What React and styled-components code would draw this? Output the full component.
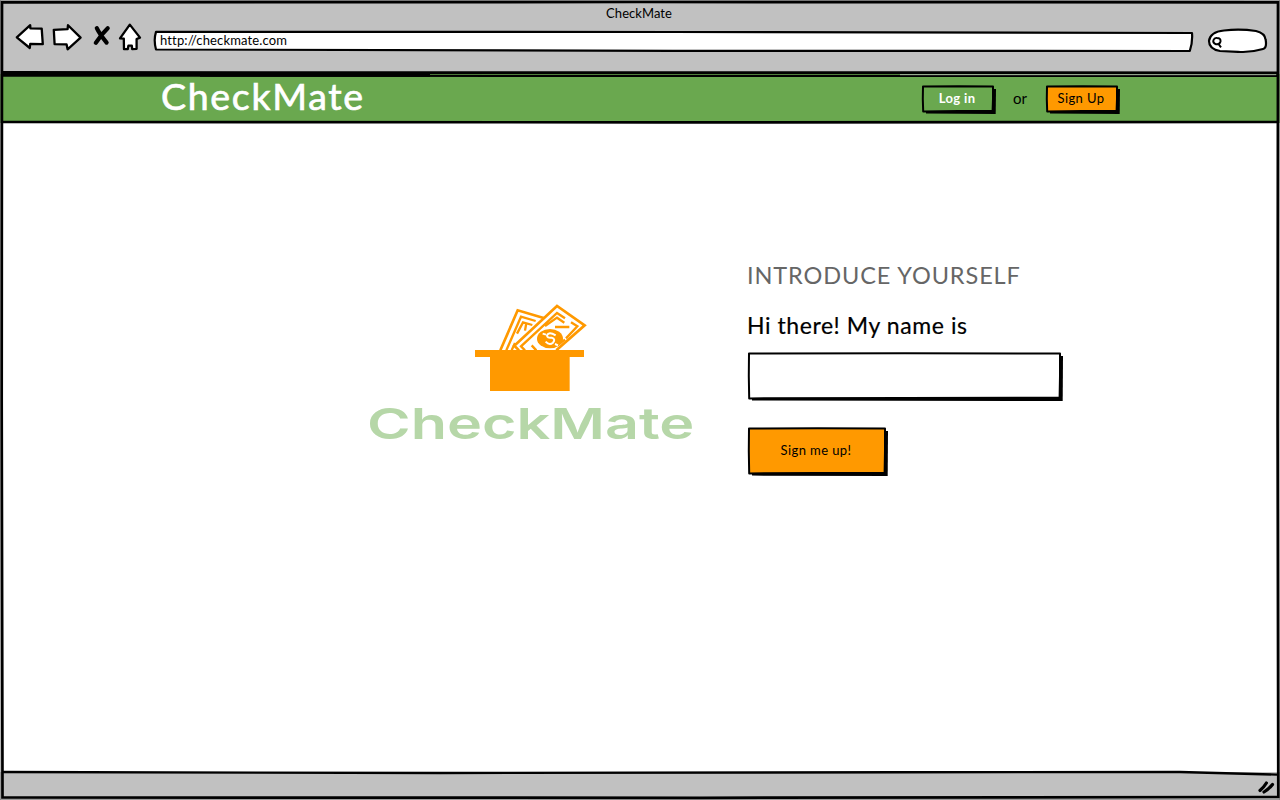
import React from "react";
import styled, { createGlobalStyle } from "styled-components";

const GlobalStyle = createGlobalStyle`
  *, *::before, *::after { box-sizing: border-box; }
  body { margin: 0; background: #fff; }
`;

const Window = styled.div`
  position: relative;
  display: flex;
  flex-direction: column;
  width: 1280px;
  height: 800px;
  overflow: hidden;
  background: #fff;
  color: #000;
  font-family: Lato, "Liberation Sans", sans-serif;
`;

const Overlay = styled.svg`
  position: absolute;
  inset: 0;
  width: 100%;
  height: 100%;
  overflow: visible;
  pointer-events: none;
`;

const Chrome = styled.header`
  height: 74px;
  flex: none;
  display: flex;
  flex-direction: column;
  background: #c1c1c1;
`;

const TitleBar = styled.div`
  height: 22px;
  padding: 5px 2px 0 0;
  display: flex;
  justify-content: center;
`;

const Label = styled.span`
  display: block;
  white-space: nowrap;
  font-size: ${(p) => p.$size}px;
  line-height: ${(p) => p.$line || p.$size}px;
  letter-spacing: ${(p) => p.$track || 0}px;
  font-weight: ${(p) => p.$weight || 400};
  color: ${(p) => p.$color || "#000"};
  -webkit-text-stroke: ${(p) => p.$ink || 0}px currentColor;
`;

const Toolbar = styled.div`
  display: flex;
  align-items: flex-start;
  padding-left: 14px;
`;

const NavIcons = styled.svg`
  width: 132px;
  height: 32px;
  flex: none;
`;

const AddressBar = styled.div`
  position: relative;
  width: 1040px;
  height: 22px;
  margin: 8px 0 0 7px;
  padding: 3px 0 0 7px;
`;

const BarText = styled.div`
  position: relative;
`;

const SearchPill = styled.svg`
  width: 62px;
  height: 26px;
  margin: 6px 0 0 13px;
`;

const Banner = styled.nav`
  height: 49px;
  flex: none;
  display: flex;
  align-items: flex-start;
  justify-content: space-between;
  padding: 3px 160px 0 161px;
  background: #6aa84f;
`;

const Account = styled.div`
  display: flex;
  align-items: flex-start;
  padding-top: 7px;
`;

const Or = styled.div`
  padding: 5px 18px 0 17px;
`;

const SketchButton = styled.button`
  position: relative;
  display: flex;
  align-items: center;
  justify-content: center;
  width: ${(p) => p.$w}px;
  height: ${(p) => p.$h}px;
  padding: 0 3px 2px 0;
  border: 0;
  background: none;
  font: inherit;
`;

const ButtonText = styled.span`
  position: relative;
`;

const Page = styled.main`
  flex: 1;
  display: flex;
  padding-left: 367px;
`;

const Brand = styled.section`
  width: 380px;
  padding-top: 172px;
`;

const Hat = styled.svg`
  display: block;
  width: 130px;
  height: 105px;
  margin-left: 98px;
`;

const Wordmark = styled.div`
  width: max-content;
  margin-top: 1px;
  font-family: Inter, sans-serif;
  font-size: 43px;
  line-height: 44px;
  font-weight: 600;
  color: #b6d7a8;
  transform: scaleX(1.378);
  transform-origin: 0 0;
`;

const Form = styled.form`
  padding-top: 138px;
`;

const Question = styled.div`
  margin-top: 22px;
`;

const Field = styled.div`
  position: relative;
  width: 316px;
  height: 50px;
  margin: 12px 0 25px;
`;

const StatusBar = styled.footer`
  height: 28px;
  flex: none;
  background: #c1c1c1;
`;

/* Box with slightly uneven edges and a solid drop shadow. */
function SketchBox({ w, h, fill }) {
  return (
    <Overlay viewBox={`0 0 ${w} ${h}`} aria-hidden="true">
      <path d={`M5 5 L${w} 5 L${w - 0.3} ${h} L5 ${h - 0.4} Z`} fill="#000" />
      <path
        d={`M2 2.6 L${w / 2} 2.2 L${w - 3} 2.6 L${w - 3} ${h / 2} L${w - 3.4} ${h - 3.2} L${w / 2} ${h - 3} L2.2 ${h - 2.6} L1.8 ${h / 2} Z`}
        fill={fill}
        stroke="#000"
        strokeWidth="2"
        strokeLinejoin="round"
      />
    </Overlay>
  );
}

function Navigation() {
  return (
    <NavIcons viewBox="14 22 132 32" stroke="#000" strokeWidth="2.3" strokeLinejoin="round" strokeLinecap="round" fill="#fff">
      <path d="M16.8 37.3 L30.2 25.2 L30.4 28.4 L41.7 28.6 L42.8 44.2 L30.2 44 L29.8 48 Z" />
      <path d="M53.8 29.8 L67.6 29.2 L68 25.2 L80.6 37.6 L67.6 49.3 L66.6 44.4 L54.6 44.2 Z" />
      <path d="M96.8 28.2 Q99.5 34 106.6 42.6 M107.7 28.2 Q101.6 34 95.8 42.8" fill="none" strokeWidth="4.2" />
      <path d="M129.8 24.6 L140 37.6 L136.6 39 L136.6 48.8 L132.2 49.2 L131.8 45.6 L128.4 45.6 L127.8 49 L124 49.2 L123.8 38.6 L120 38.4 Z" />
    </NavIcons>
  );
}

function Frame() {
  return (
    <Overlay viewBox="0 0 1280 800" fill="none" stroke="#000" strokeWidth="2.7" aria-hidden="true">
      <path d="M0 0 H1280 V800 H0 Z" stroke="#777" strokeWidth="1" />
      <path d="M2 2.3 L640 2 L1278 2.3 L1277.6 420 L1278.3 797 L700 797.8 L2.5 797.5 L1.7 400 Z" />
      <path d="M2 72.6 L500 72.8 L1278 72.9" strokeWidth="3" />
      <path d="M2 75.2 L430 75.2" strokeWidth="3" />
      <path d="M200 75.8 L1277 76.1" strokeWidth="2" />
      <path d="M900 74.7 H1276" stroke="#d0d0d0" strokeWidth=".7" />
      <path d="M2 122 L660 122.4 L1278 122" strokeWidth="2.6" />
      <path d="M2 772 L440 773 L900 772.2 L1180 772 L1277 774.6" strokeWidth="2.4" />
      <path d="M1260 790.5 Q1264 787 1266.4 783 M1264 792 Q1269 789 1272.5 784.5" strokeWidth="3.2" strokeLinecap="round" />
    </Overlay>
  );
}

function MoneyHat() {
  return (
    <Hat viewBox="0 0 390 315" fill="none" stroke="#ff9900" strokeWidth="8">
      <path d="M106 166 L158 46 L236 69" />
      <path d="M124 166 L168 65 L212 78" strokeWidth="7" />
      <path d="M140 166 L150 144 M156 116 L174 82 L202 90 M184 84 L180 107" strokeWidth="7" />
      <path d="M148 152 L276 33 L359 91 L272 166 H160 Z" fill="#fff" stroke="none" />
      <path d="M162 166 L148 152 L276 33 L359 91 L274 166" />
      <path d="M180 166 L168 154 L276 54 L300 70 M318 82 L337 94 L303 130" strokeWidth="7" />
      <path d="M240 93 L276 68 L298 83 M270 96 H313 M200 151 L214 166 M300 134 L276 152" strokeWidth="7" />
      <ellipse cx="255" cy="131" rx="39" ry="29" fill="#ff9900" stroke="none" />
      <path d="M233 116 L243 119 M272 121 Q251 108 246 121 Q246 130 260 128 Q273 131 264 143 Q253 152 242 140 M270 147 L279 151" stroke="#fff" strokeWidth="6" />
      <path d="M30 165 H357 V186 H314 V288 H75 V186 H30 Z" fill="#ff9900" stroke="none" />
    </Hat>
  );
}

export default function App() {
  return (
    <Window>
      <GlobalStyle />
      <Chrome>
        <TitleBar>
          <Label $size={13} $line={16} $track={0.05}>CheckMate</Label>
        </TitleBar>
        <Toolbar>
          <Navigation />
          <AddressBar>
            <Overlay viewBox="0 0 1040 22" aria-hidden="true">
              <path d="M3 1.8 L520 2 L1039 3 Q1039.8 12 1036.8 21 L520 20.8 L3 19.5 Q.4 10 3 1.8 Z" fill="#fff" stroke="#000" strokeWidth="2.2" strokeLinejoin="round" />
            </Overlay>
            <BarText>
              <Label $size={13} $line={14} $track={0.15}>http://checkmate.com</Label>
            </BarText>
          </AddressBar>
          <SearchPill viewBox="1206 28 62 26" fill="#fff" stroke="#000" strokeWidth="2.2">
            <path d="M1209 41 Q1210 32 1224 30.5 Q1240 28.7 1256 31 Q1265 33 1265.7 40 Q1267 48 1263 49 Q1250 52.8 1238 51.8 L1220 51 Q1209 49 1209 41 Z" />
            <path d="M1217 38 Q1221 38 1220.5 41.5 Q1219.5 45 1216 44.2 Q1212.5 43 1213.5 40 Q1214.5 37.5 1217 38 M1218.5 44 L1221 47.3" strokeWidth="2" />
          </SearchPill>
        </Toolbar>
      </Chrome>
      <Banner>
        <Label $size={37.5} $line={38} $track={1.7} $color="#fff" $ink={0.7}>CheckMate</Label>
        <Account>
          <SketchButton type="button" $w={75} $h={30}>
            <SketchBox w={75} h={30} fill="#6aa84f" />
            <ButtonText><Label $size={13} $line={16} $track={0.35} $weight={700} $color="#fff">Log in</Label></ButtonText>
          </SketchButton>
          <Or><Label $size={15} $line={18}>or</Label></Or>
          <SketchButton type="button" $w={75} $h={30}>
            <SketchBox w={75} h={30} fill="#ff9900" />
            <ButtonText><Label $size={13} $line={16} $track={0.4}>Sign Up</Label></ButtonText>
          </SketchButton>
        </Account>
      </Banner>
      <Page>
        <Brand>
          <MoneyHat />
          <Wordmark>CheckMate</Wordmark>
        </Brand>
        <Form>
          <Label $size={23.5} $line={28} $track={0.9} $color="#666">INTRODUCE YOURSELF</Label>
          <Question><Label $size={23} $line={28} $track={0.57} $ink={0.2}>Hi there! My name is</Label></Question>
          <Field><SketchBox w={316} h={50} fill="#fff" /></Field>
          <SketchButton type="button" $w={141} $h={50}>
            <SketchBox w={141} h={50} fill="#ff9900" />
            <ButtonText><Label $size={13} $line={16} $track={0.4}>Sign me up!</Label></ButtonText>
          </SketchButton>
        </Form>
      </Page>
      <StatusBar />
      <Frame />
    </Window>
  );
}
